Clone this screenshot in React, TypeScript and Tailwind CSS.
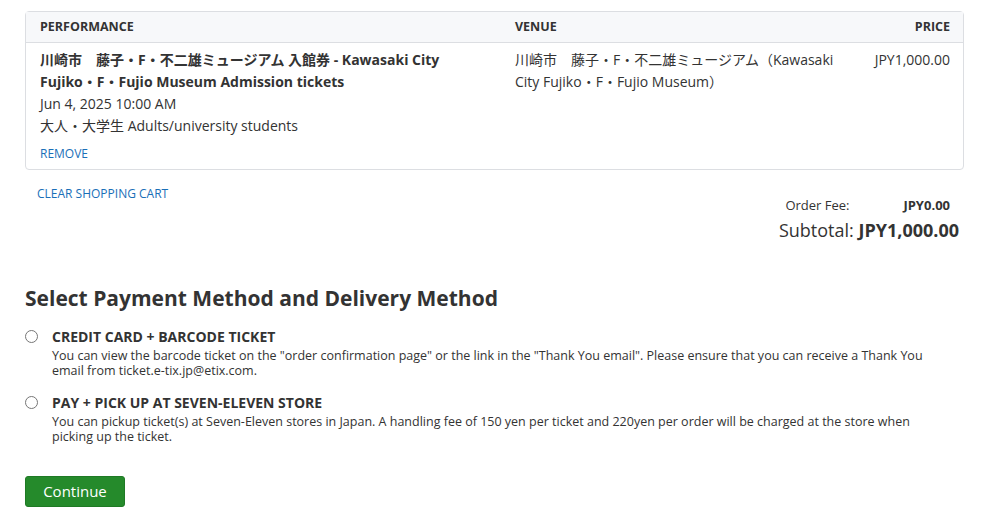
import React from "react";

const font = { fontFamily: '"Open Sans", "Noto Sans CJK JP", sans-serif' };

export default function App() {
  return (
    <div className="w-[990px] h-[529px] bg-white text-[#333] overflow-hidden" style={font}>
      <div className="pl-[25px] pr-[26px] pt-[11px]">
        <div className="border border-[#dcdee2] rounded-[4px]">
          <div className="flex bg-[#f7f8fa] border-b border-[#dcdee2] h-[31px] items-center text-[12.5px] font-bold uppercase text-[#333]">
            <div className="w-[475px] pl-[14px]">Performance</div>
            <div className="flex-1 pl-[14px]">Venue</div>
            <div className="pr-[13px]">Price</div>
          </div>
          <div className="flex pt-[6px] pb-[6px]">
            <div className="w-[475px] pl-[14px] pr-[40px]">
              <div className="text-[14px] font-bold leading-[22px]">
                川崎市　藤子・F・不二雄ミュージアム 入館券 - Kawasaki City Fujiko・F・Fujio Museum Admission tickets
              </div>
              <div className="text-[14px] leading-[22px]">Jun 4, 2025 10:00 AM</div>
              <div className="text-[14px] leading-[22px]">大人・大学生 Adults/university students</div>
              <div className="text-[12px] leading-[18px] mt-[8px] text-[#1a6fb8] uppercase">Remove</div>
            </div>
            <div className="flex-1 pl-[14px] pr-[20px] text-[14px] leading-[22px]">
              川崎市　藤子・F・不二雄ミュージアム（Kawasaki City Fujiko・F・Fujio Museum）
            </div>
            <div className="pr-[13px] text-[14px] leading-[22px]">JPY1,000.00</div>
          </div>
        </div>
        <div className="flex justify-between">
          <div className="pl-[12px] pt-[15px] text-[12px] text-[#1a6fb8] uppercase leading-[18px]">Clear shopping cart</div>
          <div className="pt-[25px] pr-[5px] flex flex-col items-end">
            <div className="flex text-[13px] leading-[20px] pr-[9px]">
              <span className="w-[118px]">Order Fee:</span>
              <span className="font-bold">JPY0.00</span>
            </div>
            <div className="text-[18px] leading-[26px] mt-[2px]">
              Subtotal: <span className="font-bold">JPY1,000.00</span>
            </div>
          </div>
        </div>
        <h2 className="text-[21px] font-bold leading-[28px] mt-[41px]">Select Payment Method and Delivery Method</h2>
        <div className="mt-[16px] flex flex-col gap-[16px]">
          <label className="flex">
            <span className="w-[13px] h-[13px] mt-[2px] rounded-full border border-[#767676] bg-white shrink-0"></span>
            <div className="ml-[14px]">
              <div className="text-[14px] font-bold uppercase leading-[18px]">Credit Card + Barcode Ticket</div>
              <div className="text-[12.5px] leading-[15px] mt-[2px] pr-[40px]">
                You can view the barcode ticket on the "order confirmation page" or the link in the "Thank You email". Please ensure that you can receive a Thank You email from ticket.e-tix.jp@etix.com.
              </div>
            </div>
          </label>
          <label className="flex">
            <span className="w-[13px] h-[13px] mt-[2px] rounded-full border border-[#767676] bg-white shrink-0"></span>
            <div className="ml-[14px]">
              <div className="text-[14px] font-bold uppercase leading-[18px]">Pay + Pick up at Seven-Eleven Store</div>
              <div className="text-[12.5px] leading-[15px] mt-[2px] pr-[40px]">
                You can pickup ticket(s) at Seven-Eleven stores in Japan. A handling fee of 150 yen per ticket and 220yen per order will be charged at the store when picking up the ticket.
              </div>
            </div>
          </label>
        </div>
        <button className="mt-[32px] w-[100px] h-[31px] rounded-[3px] bg-[#258a2b] text-white text-[15px] border border-[#1f7a25]" style={font}>
          Continue
        </button>
      </div>
    </div>
  );
}
